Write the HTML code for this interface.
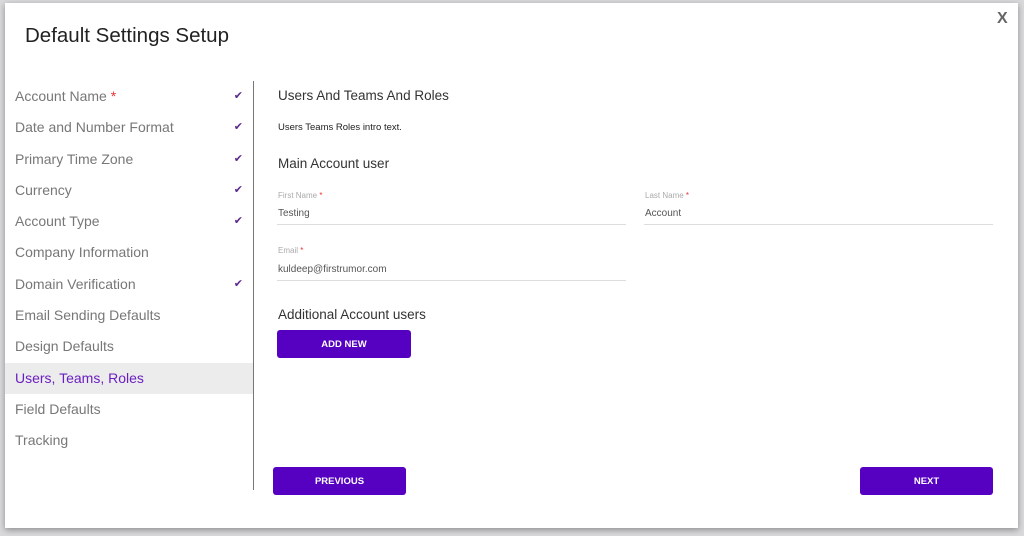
<!DOCTYPE html>
<html><head><meta charset="utf-8"><style>
*{margin:0;padding:0;box-sizing:border-box}
body{width:1024px;height:536px;background:#d9d9dc;font-family:"Liberation Sans",sans-serif;position:relative;overflow:hidden}
.modal{position:absolute;left:5px;top:3px;width:1013px;height:525px;background:#fff;box-shadow:0 2px 6px rgba(0,0,0,.35)}
.abs{position:absolute}
h1{position:absolute;left:20px;top:21px;font-size:20.5px;font-weight:normal;color:#222}
.x{position:absolute;left:992px;top:7px;font-size:16px;font-weight:bold;color:#666}
.nav{position:absolute;left:0;top:78px;width:248px}
.nav div{height:31.3px;line-height:31px;padding-left:10px;font-size:14px;color:#777;position:relative}
.nav div.act{background:#ececec;color:#6a1fc0}
.nav .ck{position:absolute;right:10px;top:0;color:#5b2a8c;font-size:11px}
.div{position:absolute;left:248px;top:78px;width:1px;height:409px;background:#777}
.lbl{font-size:8px;color:#aaa}
.lbl b{color:#e33;font-weight:normal}
.val{font-size:10px;color:#555}
.line{height:1px;background:#ddd}
.btn{position:absolute;background:#5600c2;color:#fff;font-size:9.5px;font-weight:bold;text-align:center;border-radius:3px;height:28px;line-height:30px}
</style></head><body>
<div class="modal">
<h1>Default Settings Setup</h1>
<div class="x">X</div>
<div class="nav">
<div>Account Name <span style="color:#e33">*</span><span class="ck">✔</span></div>
<div>Date and Number Format<span class="ck">✔</span></div>
<div>Primary Time Zone<span class="ck">✔</span></div>
<div>Currency<span class="ck">✔</span></div>
<div>Account Type<span class="ck">✔</span></div>
<div>Company Information</div>
<div>Domain Verification<span class="ck">✔</span></div>
<div>Email Sending Defaults</div>
<div>Design Defaults</div>
<div class="act">Users, Teams, Roles</div>
<div>Field Defaults</div>
<div>Tracking</div>
</div>
<div class="div"></div>
<div class="abs" style="left:273px;top:85px;font-size:13.5px;color:#333">Users And Teams And Roles</div>
<div class="abs" style="left:273px;top:119px;font-size:9.5px;color:#222">Users Teams Roles intro text.</div>
<div class="abs" style="left:273px;top:153px;font-size:13.5px;color:#333">Main Account user</div>
<div class="abs lbl" style="left:273px;top:188px">First Name <b>*</b></div>
<div class="abs val" style="left:273px;top:205px">Testing</div>
<div class="abs line" style="left:272px;top:221px;width:349px"></div>
<div class="abs lbl" style="left:640px;top:188px">Last Name <b>*</b></div>
<div class="abs val" style="left:640px;top:205px">Account</div>
<div class="abs line" style="left:639px;top:221px;width:349px"></div>
<div class="abs lbl" style="left:273px;top:243px">Email <b>*</b></div>
<div class="abs val" style="left:273px;top:261px">kuldeep@firstrumor.com</div>
<div class="abs line" style="left:272px;top:277px;width:349px"></div>
<div class="abs" style="left:273px;top:304px;font-size:13.5px;color:#333">Additional Account users</div>
<div class="btn" style="left:272px;top:327px;width:134px">ADD NEW</div>
<div class="btn" style="left:268px;top:464px;width:133px">PREVIOUS</div>
<div class="btn" style="left:855px;top:464px;width:133px">NEXT</div>
</div>
</body></html>
